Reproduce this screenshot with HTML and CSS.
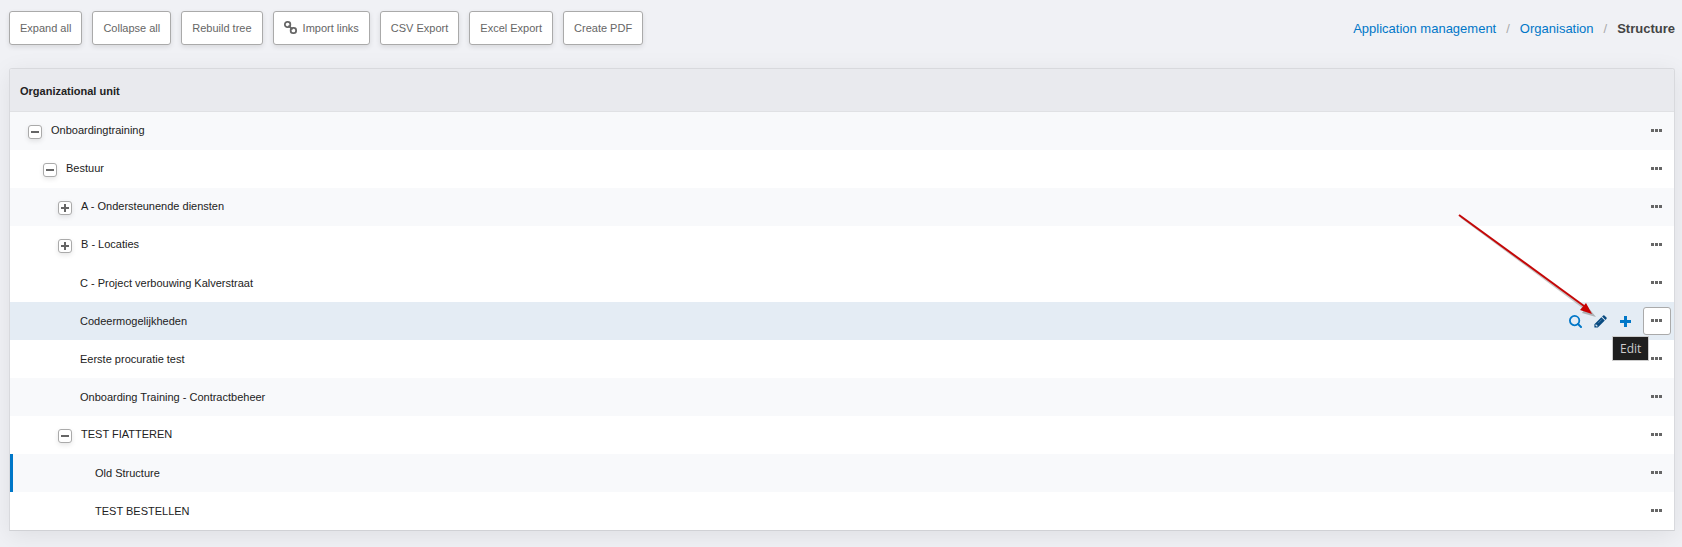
FILE: index.html
```html
<!DOCTYPE html>
<html lang="en">
<head>
    <meta charset="UTF-8">
    <meta name="viewport" content="width=device-width, initial-scale=1.0">
    <title>Structure</title>
    <link rel="stylesheet" href="styles.css">
</head>
<body>

    <!-- Toolbar and breadcrumb -->
    <header class="topbar">
        <div class="toolbar">
            <button type="button" class="btn">Expand all</button>
            <button type="button" class="btn">Collapse all</button>
            <button type="button" class="btn">Rebuild tree</button>
            <button type="button" class="btn">
                <svg class="icon-link" viewBox="0 0 13 13" aria-hidden="true">
                    <g fill="none" stroke="currentColor" stroke-width="1.8">
                        <rect x="0.9" y="0.9" width="5.4" height="5.2" rx="2.4"/>
                        <rect x="6.7" y="6.9" width="5.4" height="5.2" rx="2.4"/>
                        <path d="M4.4 4.6L8.6 8.4"/>
                    </g>
                </svg>
                Import links
            </button>
            <button type="button" class="btn">CSV Export</button>
            <button type="button" class="btn">Excel Export</button>
            <button type="button" class="btn">Create PDF</button>
        </div>
        <nav class="breadcrumb" aria-label="Breadcrumb">
            <a href="#">Application management</a>
            <span class="separator">/</span>
            <a href="#">Organisation</a>
            <span class="separator">/</span>
            <strong>Structure</strong>
        </nav>
    </header>

    <!-- Organisation tree -->
    <main class="panel">
        <table class="tree">
            <thead>
                <tr>
                    <th colspan="2">Organizational unit</th>
                </tr>
            </thead>
            <tbody>
                <tr class="alt">
                    <td><div class="node level-0"><button type="button" class="toggle minus" aria-label="Collapse"></button>Onboardingtraining</div></td>
                    <td><div class="actions"><button type="button" class="more" aria-label="More"><i></i><i></i><i></i></button></div></td>
                </tr>
                <tr>
                    <td><div class="node level-1"><button type="button" class="toggle minus" aria-label="Collapse"></button>Bestuur</div></td>
                    <td><div class="actions"><button type="button" class="more" aria-label="More"><i></i><i></i><i></i></button></div></td>
                </tr>
                <tr class="alt">
                    <td><div class="node level-2"><button type="button" class="toggle plus" aria-label="Expand"></button>A - Ondersteunende diensten</div></td>
                    <td><div class="actions"><button type="button" class="more" aria-label="More"><i></i><i></i><i></i></button></div></td>
                </tr>
                <tr>
                    <td><div class="node level-2"><button type="button" class="toggle plus" aria-label="Expand"></button>B - Locaties</div></td>
                    <td><div class="actions"><button type="button" class="more" aria-label="More"><i></i><i></i><i></i></button></div></td>
                </tr>
                <tr>
                    <td><div class="node leaf level-2">C - Project verbouwing Kalverstraat</div></td>
                    <td><div class="actions"><button type="button" class="more" aria-label="More"><i></i><i></i><i></i></button></div></td>
                </tr>
                <tr class="active">
                    <td><div class="node leaf level-2">Codeermogelijkheden</div></td>
                    <td>
                        <div class="actions">
                            <a href="#" class="action" aria-label="View">
                                <svg width="13" height="13" viewBox="0 0 13 13" aria-hidden="true">
                                    <circle cx="5.6" cy="5.6" r="4.7" fill="none" stroke="currentColor" stroke-width="1.8"/>
                                    <path d="M9 9l3 3" stroke="currentColor" stroke-width="2" stroke-linecap="round"/>
                                </svg>
                            </a>
                            <a href="#" class="action edit" aria-label="Edit">
                                <svg width="13" height="13" viewBox="0 0 13 13" aria-hidden="true">
                                    <path fill="currentColor" fill-rule="evenodd" d="M0.4 12.6V9.2L7.4 2.2L10.8 5.6L3.8 12.6ZM1.4 9.8V10.8H2.2V11.6H3.2L3.8 11L2 9.2Z"/>
                                    <path stroke="#6f9cc4" stroke-width=".6" d="M4 8.2L7.8 4.4"/>
                                    <path fill="currentColor" d="M8.1 1.5L9.2 0.5Q9.8 0 10.4 0.5L12.5 2.6Q13 3.2 12.5 3.8L11.5 4.9Z"/>
                                </svg>
                                <span class="tooltip">Edit</span>
                                <svg class="pointer" width="142" height="106" viewBox="0 0 142 106" aria-hidden="true">
                                    <path d="M3 3L130 97" stroke="#888" stroke-opacity=".45" stroke-width="2"/>
                                    <path d="M138 103L124 99L129 92Z" fill="#888" fill-opacity=".6"/>
                                    <path d="M1 1L126 92" stroke="#c40808" stroke-width="2"/>
                                    <path d="M134 100L122 96L128 89Z" fill="#c80000"/>
                                </svg>
                            </a>
                            <a href="#" class="action" aria-label="Add">
                                <svg width="11" height="11" viewBox="0 0 11 11" aria-hidden="true">
                                    <path d="M4 0h3v4h4v3h-4v4h-3v-4h-4v-3h4z" fill="currentColor"/>
                                </svg>
                            </a>
                            <button type="button" class="more" aria-label="More"><i></i><i></i><i></i></button>
                        </div>
                    </td>
                </tr>
                <tr>
                    <td><div class="node leaf level-2">Eerste procuratie test</div></td>
                    <td><div class="actions"><button type="button" class="more" aria-label="More"><i></i><i></i><i></i></button></div></td>
                </tr>
                <tr class="alt">
                    <td><div class="node leaf level-2">Onboarding Training - Contractbeheer</div></td>
                    <td><div class="actions"><button type="button" class="more" aria-label="More"><i></i><i></i><i></i></button></div></td>
                </tr>
                <tr>
                    <td><div class="node level-2"><button type="button" class="toggle minus" aria-label="Collapse"></button>TEST FIATTEREN</div></td>
                    <td><div class="actions"><button type="button" class="more" aria-label="More"><i></i><i></i><i></i></button></div></td>
                </tr>
                <tr class="alt marked">
                    <td><div class="node leaf level-3">Old Structure</div></td>
                    <td><div class="actions"><button type="button" class="more" aria-label="More"><i></i><i></i><i></i></button></div></td>
                </tr>
                <tr>
                    <td><div class="node leaf level-3">TEST BESTELLEN</div></td>
                    <td><div class="actions"><button type="button" class="more" aria-label="More"><i></i><i></i><i></i></button></div></td>
                </tr>
            </tbody>
        </table>
    </main>

</body>
</html>
```
FILE: styles.css
```css
* {
    box-sizing: border-box;
}

body {
    margin: 0;
    padding: 11px 7px 16px 9px;
    background: #f0f1f5;
    color: #222;
    font-family: "Liberation Sans", Arial, sans-serif;
    font-size: 11px;
}

button {
    font: inherit;
    cursor: pointer;
}

a {
    color: #0077c8;
    text-decoration: none;
}

/* Top bar */
.topbar {
    display: flex;
    justify-content: space-between;
    align-items: center;
    margin-bottom: 23px;
}

.toolbar {
    display: flex;
    gap: 10px;
}

.btn {
    display: flex;
    align-items: center;
    gap: 6px;
    height: 34px;
    padding: 0 10px;
    background: #fff;
    border: 1px solid #aaa;
    border-radius: 3px;
    box-shadow: 0 2px 5px rgba(0, 0, 0, 0.1);
    color: #666;
    white-space: nowrap;
}

.icon-link {
    width: 13px;
    height: 13px;
    margin-bottom: 2px;
}

.breadcrumb {
    display: flex;
    gap: 10px;
    font-size: 13px;
}

.breadcrumb .separator {
    color: #aaa;
}

.breadcrumb strong {
    color: #444;
}

/* Panel */
.panel {
    border: 1px solid #d8d9dd;
    border-bottom-color: #d0d1d5;
    border-radius: 3px 3px 0 0;
    background: #fff;
    box-shadow: 0 5px 25px rgba(0, 0, 0, 0.08);
}

.tree {
    width: 100%;
    border-spacing: 0;
}

.tree th {
    height: 43px;
    padding: 2px 10px 0;
    background: #e9eaee;
    border-bottom: 1px solid #e0e1e4;
    border-radius: 2px 2px 0 0;
    text-align: left;
}

.tree td {
    height: 38px;
    padding: 0;
}

.tree .alt {
    background: #f8f9fb;
}

.tree .active {
    background: #e4ecf4;
}

.tree .marked td:first-child {
    box-shadow: inset 3px 0 #0077c8;
}

/* Tree nodes */
.node {
    display: flex;
    align-items: center;
    gap: 9px;
    height: 38px;
    padding-bottom: 3px;
}

.level-0 {
    padding-left: 18px;
}

.level-1 {
    padding-left: 33px;
}

.level-2 {
    padding-left: 48px;
}

.leaf {
    padding-bottom: 0;
}

.leaf.level-2 {
    padding-left: 70px;
}

.leaf.level-3 {
    padding-left: 85px;
}

.toggle {
    width: 14px;
    height: 14px;
    margin-top: 5px;
    padding: 0;
    border: 1px solid #aaa;
    border-radius: 3px;
    background: linear-gradient(#666, #666) center / 8px 2px no-repeat #fff;
    box-shadow: 0 2px 5px rgba(0, 0, 0, 0.1);
}

.toggle.plus {
    background:
        linear-gradient(#666, #666) center / 8px 2px no-repeat,
        linear-gradient(#666, #666) center / 2px 8px no-repeat,
        #fff;
}

/* Row actions */
.actions {
    display: flex;
    justify-content: flex-end;
    align-items: center;
    padding-right: 3px;
}

.action {
    position: relative;
    display: flex;
    justify-content: center;
    align-items: center;
    width: 25px;
    height: 28px;
}

.more {
    display: flex;
    justify-content: center;
    align-items: center;
    gap: 1px;
    width: 28px;
    height: 28px;
    margin-left: 5px;
    padding: 0 1px 1px 0;
    border: 1px solid transparent;
    border-radius: 3px;
    background: none;
}

.more i {
    width: 3px;
    height: 3px;
    background: #666;
}

.active .more {
    border-color: #aaa;
    background: #fff;
}

.edit {
    color: #084a80;
}

.tooltip {
    position: absolute;
    top: 29px;
    left: 24px;
    z-index: 2;
    padding: 0 7px;
    border: 1px solid #ccc;
    background: #1f1f1f;
    color: #ccc;
    font-family: "Open Sans", "Noto Sans", sans-serif;
    font-size: 12px;
    line-height: 23px;
}

.pointer {
    position: absolute;
    right: 13px;
    bottom: 15px;
    z-index: 1;
    pointer-events: none;
}
```
